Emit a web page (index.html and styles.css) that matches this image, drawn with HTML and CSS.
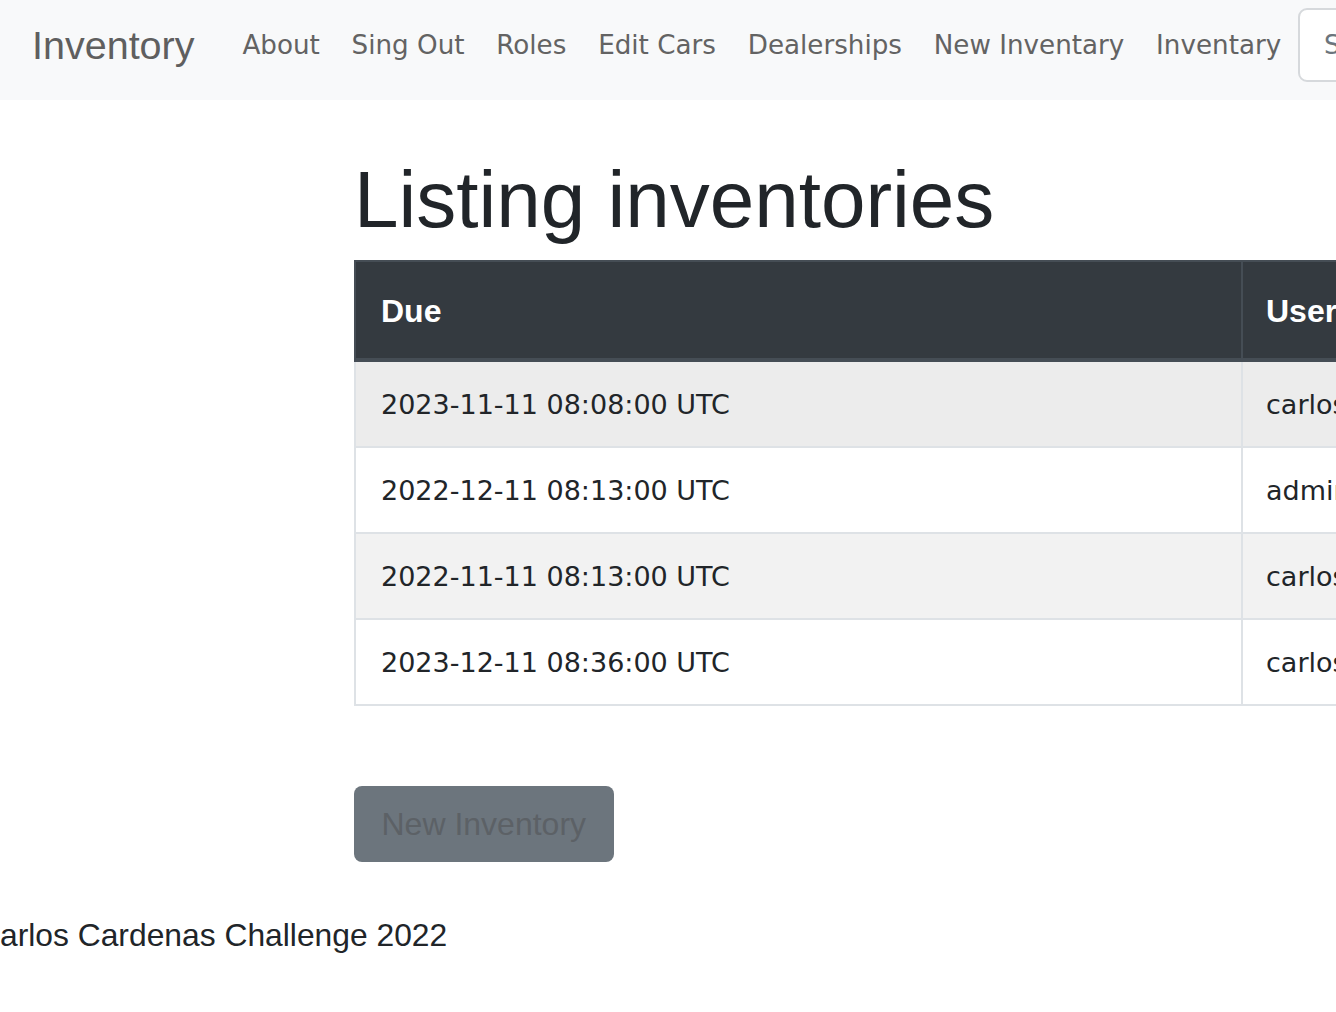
FILE: index.html
```html
<!DOCTYPE html>
<html lang="en">
<head>
<meta charset="utf-8">
<title>Inventory</title>
<link rel="stylesheet" href="styles.css">
</head>
<body>
<nav class="navbar">
  <a class="brand" href="#">Inventory</a>
  <ul class="nav">
    <li><a class="nav-link" href="#">About</a></li>
    <li><a class="nav-link" href="#">Sing Out</a></li>
    <li><a class="nav-link" href="#">Roles</a></li>
    <li><a class="nav-link" href="#">Edit Cars</a></li>
    <li><a class="nav-link" href="#">Dealerships</a></li>
    <li><a class="nav-link" href="#">New Inventary</a></li>
    <li><a class="nav-link" href="#">Inventary</a></li>
  </ul>
  <input class="search" type="search" placeholder="Search">
</nav>

<main class="container">
  <h1 class="title">Listing inventories</h1>
  <table class="table">
    <colgroup><col class="col-due"><col class="col-user"></colgroup>
    <thead>
      <tr><th>Due</th><th>User</th></tr>
    </thead>
    <tbody>
      <tr class="row-hover"><td>2023-11-11 08:08:00 UTC</td><td>carlos</td></tr>
      <tr><td>2022-12-11 08:13:00 UTC</td><td>admin</td></tr>
      <tr class="row-stripe"><td>2022-11-11 08:13:00 UTC</td><td>carlos</td></tr>
      <tr><td>2023-12-11 08:36:00 UTC</td><td>carlos</td></tr>
    </tbody>
  </table>
  <a class="btn" href="#">New Inventory</a>
</main>

<footer class="footer">Carlos Cardenas Challenge 2022</footer>
</body>
</html>
```

FILE: styles.css
```css
html, body {
  overflow: hidden;
}
body {
  margin: 0;
  width: 1336px;
  font-family: "Liberation Sans", Arial, sans-serif;
  font-size: 32px;
  color: #212529;
  background: #fff;
}
a { text-decoration: none; }

.navbar {
  display: flex;
  align-items: center;
  height: 100px;
  box-sizing: border-box;
  padding: 0 0 10px 32px;
  background: #f8f9fa;
  white-space: nowrap;
}
.brand {
  font-family: "Liberation Sans", Arial, sans-serif;
  font-size: 39.5px;
  line-height: 60px;
  color: #5f5f5f;
  margin-right: 32px;
}
.nav {
  display: flex;
  list-style: none;
  margin: 0;
  padding: 0;
}
.nav-link {
  display: block;
  padding: 0 15.9px;
  font-family: "DejaVu Sans", Verdana, sans-serif;
  font-size: 26.2px;
  line-height: 38px;
  color: #636363;
}
.search {
  flex: none;
  width: 300px;
  height: 74px;
  box-sizing: border-box;
  margin-left: 1px;
  padding: 0 24px;
  border: 2px solid #d6d9dc;
  border-radius: 9px;
  background: #fff;
  font-family: "DejaVu Sans", Verdana, sans-serif;
  font-size: 26px;
  color: #495057;
}
.search::placeholder { color: #6c757d; }

.container {
  padding-left: 354px;
}
.title {
  margin: 52px 0 12px;
  font-size: 80px;
  line-height: 96px;
  font-weight: 500;
  color: #212529;
  white-space: nowrap;
}

.table {
  width: 1600px;
  table-layout: fixed;
  border-collapse: separate;
  border-spacing: 0;
}
.col-due { width: 889px; }
.table th {
  text-align: left;
  font-weight: bold;
  font-size: 32px;
  line-height: 48px;
  padding: 25px 23px 23px;
  color: #fff;
  background: #343a40;
  border-top: 2px solid #454d55;
  border-bottom: 4px solid #454d55;
}
.table th:first-child {
  padding-left: 25px;
  border-left: 2px solid #454d55;
  border-right: 2px solid #454d55;
}
.table td {
  font-family: "DejaVu Sans", Verdana, sans-serif;
  font-size: 27px;
  line-height: 36px;
  padding: 25px 23px 23px;
  color: #212529;
  border-bottom: 2px solid #dee2e6;
  white-space: nowrap;
}
.table td:first-child {
  padding-left: 25px;
  border-left: 2px solid #dee2e6;
  border-right: 2px solid #dee2e6;
}
.row-hover td { background: #ececec; }
.row-stripe td { background: #f2f2f2; }

.btn {
  display: inline-block;
  margin-top: 80px;
  height: 76px;
  line-height: 76px;
  padding: 0 27.5px;
  border-radius: 8px;
  background: #6c757d;
  color: #5c6166;
  font-size: 32px;
}

.footer {
  margin: 49px 0 0 -23px;
  font-size: 31.8px;
  line-height: 48px;
  color: #212529;
  white-space: nowrap;
}
```
